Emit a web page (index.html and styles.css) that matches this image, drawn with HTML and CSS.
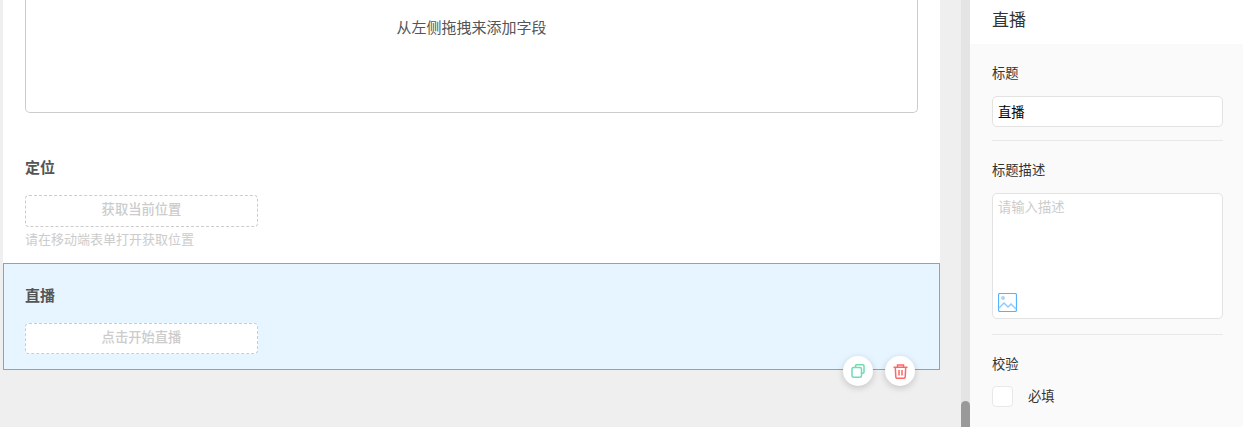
FILE: index.html
```html
<!DOCTYPE html>
<html lang="zh-CN">
<head>
    <meta charset="UTF-8">
    <title>直播</title>
    <link rel="stylesheet" href="styles.css">
</head>
<body>
    <main class="canvas">
        <div class="form">
            <div class="drop-box">从左侧拖拽来添加字段</div>
            <div class="field field-location">
                <div class="field-title">定位</div>
                <div class="dash-btn">获取当前位置</div>
                <div class="field-hint">请在移动端表单打开获取位置</div>
            </div>
            <div class="field field-live">
                <div class="field-title">直播</div>
                <div class="dash-btn dash-btn-live">点击开始直播</div>
                <div class="actions">
                    <button class="action">
                        <svg width="14" height="14" viewBox="0 0 14 14" fill="none" stroke="#6fdcb2" stroke-width="1.500">
                            <path d="M4.500 3V2a1.200 1.200 0 0 1 1.200-1.200h6A1.200 1.200 0 0 1 13 2v6a1.200 1.200 0 0 1-1.200 1.200H11"/>
                            <rect x="1" y="3.500" width="9.500" height="9.700" rx="1.500"/>
                        </svg>
                    </button>
                    <button class="action">
                        <svg width="15" height="15" viewBox="0 0 15 15" fill="none" stroke="#ff6666" stroke-width="1.500">
                            <path d="M0.500 3.200h14M4.500 3.200V1h6v2.200M2.300 3.200l0.500 9.800a1.200 1.200 0 0 0 1.200 1.200h7a1.200 1.200 0 0 0 1.200-1.200l0.500-9.800M6 6v5.500M9 6v5.500"/>
                        </svg>
                    </button>
                </div>
            </div>
        </div>
    </main>
    <div class="scrollbar"><div class="thumb"></div></div>
    <aside class="panel">
        <div class="panel-head">直播</div>
        <div class="panel-body">
            <section class="group group-title">
                <div class="group-label">标题</div>
                <div class="text-input">直播</div>
            </section>
            <section class="group group-desc">
                <div class="group-label">标题描述</div>
                <div class="text-area">
                    <div class="placeholder">请输入描述</div>
                    <svg class="image-icon" width="19" height="19" viewBox="0 0 19 19" fill="none">
                        <rect x="0.500" y="0.500" width="18" height="18" rx="1.500" stroke="#55b3ff" stroke-width="1.200"/>
                        <circle cx="5" cy="5" r="2" fill="#a8d6ff"/>
                        <path d="M1 15l5-5 4 4 3-3 5 5" stroke="#8fcbff" stroke-width="1.500"/>
                    </svg>
                </div>
            </section>
            <section class="group group-check">
                <div class="group-label">校验</div>
                <label class="check-row">
                    <span class="check-box"></span>
                    <span class="check-text">必填</span>
                </label>
            </section>
        </div>
    </aside>
</body>
</html>
```

FILE: styles.css
```css
* {
    box-sizing: border-box;
}
html, body {
    height: 100%;
}
body {
    display: flex;
    margin: 0;
    height: 427px;
    overflow: hidden;
    background-color: #efefef;
    font-family: "Liberation Sans", "Noto Sans CJK SC", sans-serif;
    font-size: 14px;
    color: #333;
}
.canvas {
    width: 961px;
    padding-left: 3px;
    padding-right: 21px;
}
.form {
    height: 370px;
    background-color: #fff;
}
.drop-box {
    display: flex;
    justify-content: center;
    width: 893px;
    height: 113px;
    margin-left: 22px;
    padding-top: 18px;
    line-height: 20px;
    font-size: 15px;
    color: #555;
    border: 1px solid #ccc;
    border-top: none;
    border-radius: 0 0 5px 5px;
}
.field {
    padding: 0 22px;
}
.field-location {
    height: 150px;
    padding-top: 45px;
}
.field-title {
    height: 20px;
    line-height: 20px;
    font-size: 15px;
    font-weight: bold;
    color: #555;
}
.dash-btn {
    width: 233px;
    height: 32px;
    margin-top: 17px;
    line-height: 28px;
    text-align: center;
    font-weight: 500;
    font-size: 13.300px;
    color: #ccc;
    background-color: #fff;
    border: 1px dashed #ccc;
    border-radius: 4px;
}
.field-hint {
    margin-top: 4px;
    line-height: 18px;
    font-size: 13px;
    color: #ccc;
}
.field-live {
    position: relative;
    height: 107px;
    padding-top: 22px;
    background-color: #e6f5ff;
    border: 1px solid #66aee8;
    padding-left: 21px;
}
.dash-btn-live {
    margin-top: 17px;
    height: 31px;
    line-height: 27px;
}
.actions {
    position: absolute;
    top: 92px;
    right: 24px;
    display: flex;
    gap: 12px;
}
.action {
    display: flex;
    align-items: center;
    justify-content: center;
    width: 30px;
    height: 30px;
    padding: 0;
    border: none;
    border-radius: 50%;
    background-color: #fff;
    box-shadow: 0 2px 7px rgba(0, 0, 0, 0.18);
}
.scrollbar {
    display: flex;
    align-items: flex-end;
    width: 9px;
    background-color: #e4e4e4;
}
.thumb {
    width: 9px;
    height: 26px;
    background-color: #999;
    border-radius: 5px 5px 0 0;
}
.panel {
    flex: 1;
    display: flex;
    flex-direction: column;
    background-color: #fafafa;
}
.panel-head {
    height: 44px;
    padding: 9px 22px 0;
    line-height: 24px;
    font-size: 17px;
    color: #333;
    background-color: #fff;
}
.panel-body {
    width: 231px;
    margin-left: 22px;
    font-size: 13.300px;
}
.group-label {
    line-height: 18px;
}
.group-title {
    height: 97px;
    padding-top: 21px;
    border-bottom: 1px solid #e8e8e8;
}
.text-input {
    height: 31px;
    margin-top: 13px;
    padding: 1px 0 0 5px;
    line-height: 29px;
    color: #000;
    background-color: #fff;
    border: 1px solid #e2e2e2;
    border-radius: 5px;
}
.group-desc {
    height: 194px;
    padding-top: 21px;
    border-bottom: 1px solid #e8e8e8;
}
.text-area {
    display: flex;
    flex-direction: column;
    justify-content: space-between;
    height: 126px;
    margin-top: 13px;
    padding: 5px 5px 6px;
    background-color: #fff;
    border: 1px solid #e2e2e2;
    border-radius: 5px;
}
.placeholder {
    line-height: 18px;
    color: #ccc;
}
.group-check {
    padding-top: 21px;
}
.check-row {
    display: flex;
    align-items: center;
    gap: 15px;
    margin-top: 12px;
}
.check-box {
    width: 21px;
    height: 21px;
    background-color: #fff;
    border: 1px solid #e8e8e8;
    border-radius: 4px;
}
.check-text {
    padding-bottom: 2px;
}
```
